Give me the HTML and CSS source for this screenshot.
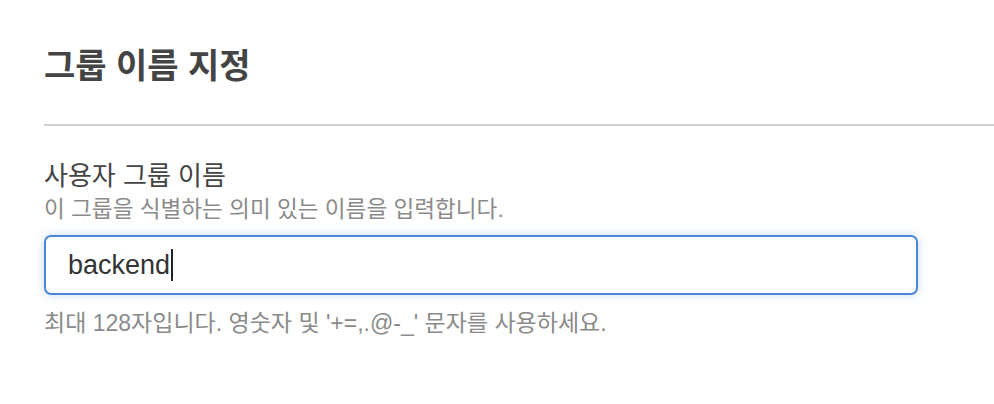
FILE: index.html
```html
<!DOCTYPE html>
<html lang="ko">
<head>
    <meta charset="UTF-8">
    <meta name="viewport" content="width=device-width, initial-scale=1.0">
    <title>그룹 이름 지정</title>
    <link rel="stylesheet" href="styles.css">
</head>
<body>
    <div class="panel">
        <div class="panel-header">
            <h2>그룹 이름 지정</h2>
        </div>
        <div class="panel-body">
            <div class="form-group">
                <label for="groupName">사용자 그룹 이름</label>
                <p class="description">이 그룹을 식별하는 의미 있는 이름을 입력합니다.</p>
                <div class="input-box">
                    <span class="input-value">backend</span><span class="caret"></span>
                </div>
                <p class="hint">최대 128자입니다. 영숫자 및 '+=,.@-_' 문자를 사용하세요.</p>
            </div>
        </div>
    </div>
</body>
</html>
```

FILE: styles.css
```css
* {
    box-sizing: border-box;
    margin: 0;
    padding: 0;
}

body {
    font-family: "Liberation Sans", "Noto Sans CJK KR", sans-serif;
    background-color: #fff;
    color: #444;
    padding-left: 44px;
}

.panel-header {
    padding-top: 42px;
    padding-bottom: 34px;
    border-bottom: 2px solid #cfcfcf;
}

.panel-header h2 {
    font-size: 34px;
    font-weight: bold;
    line-height: 48px;
    color: #444;
}

.panel-body {
    padding-top: 32px;
}

label {
    display: block;
    font-size: 26px;
    line-height: 36px;
    color: #444;
}

.description {
    font-size: 22.6px;
    line-height: 30px;
    color: #8a8a8a;
    margin-top: 1px;
    margin-bottom: 10px;
}

.input-box {
    width: 874px;
    height: 60px;
    border: 2px solid #4a86d8;
    border-radius: 7px;
    box-shadow: 0 0 10px rgba(74, 134, 216, 0.3);
    padding-left: 22px;
    display: flex;
    align-items: center;
}

.input-value {
    font-size: 27px;
    color: #333;
}

.caret {
    width: 2px;
    height: 32px;
    background-color: #222;
    margin-left: 1px;
}

.hint {
    font-size: 23px;
    line-height: 30px;
    color: #8a8a8a;
    margin-top: 13px;
}
```
